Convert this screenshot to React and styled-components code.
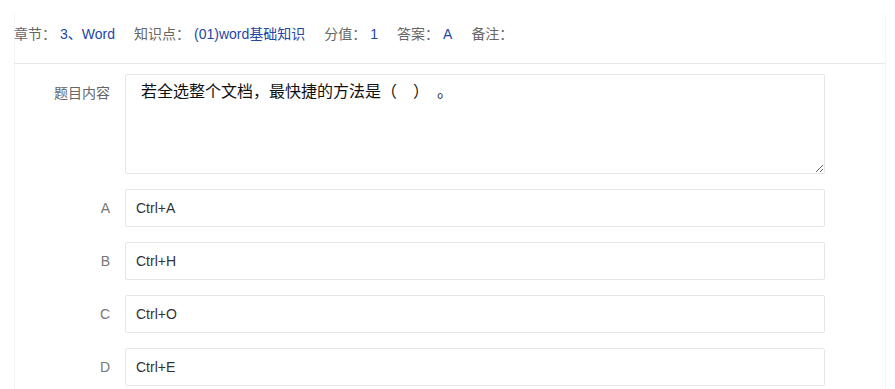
import React from "react";
import styled, { createGlobalStyle } from "styled-components";

const GlobalStyle = createGlobalStyle`
  html, body {
    margin: 0;
    padding: 0;
    background: #fff;
    font-family: "Liberation Sans", "Noto Sans CJK SC", sans-serif;
    font-size: 14px;
    color: #333;
  }
`;

const meta = [
  { label: "章节：", value: "3、Word" },
  { label: "知识点：", value: "(01)word基础知识" },
  { label: "分值：", value: "1" },
  { label: "答案：", value: "A" },
  { label: "备注：", value: "" },
];

const options = [
  { key: "A", text: "Ctrl+A" },
  { key: "B", text: "Ctrl+H" },
  { key: "C", text: "Ctrl+O" },
  { key: "D", text: "Ctrl+E" },
];

export default function App() {
  return (
    <>
      <GlobalStyle />
      <Page>
        <Card>
          <Header>
            {meta.map((m) => (
              <MetaItem key={m.label}>
                <MetaLabel>{m.label}</MetaLabel>
                {m.value && <MetaValue>{m.value}</MetaValue>}
              </MetaItem>
            ))}
          </Header>
          <Body>
            <FormRow>
              <Label top>题目内容</Label>
              <Content
                readOnly
                defaultValue="若全选整个文档，最快捷的方法是（　）　。"
              />
            </FormRow>
            {options.map((o) => (
              <FormRow key={o.key}>
                <Label>{o.key}</Label>
                <OptionInput readOnly defaultValue={o.text} />
              </FormRow>
            ))}
          </Body>
        </Card>
      </Page>
    </>
  );
}

const Page = styled.div`
  padding: 14px 9px 0 14px;
  height: 375px;
  overflow: hidden;
`;

const Card = styled.div`
  width: 872px;
  box-sizing: border-box;
  border-left: 1px solid #f4f4f4;
  border-right: 1px solid #f4f4f4;
  min-height: 400px;
`;

const Header = styled.div`
  display: flex;
  align-items: center;
  padding: 10px 0 19px;
  margin-left: -1px;
  line-height: 20px;
  border-bottom: 1px solid #e8e8e8;
`;

const MetaItem = styled.div`
  display: flex;
  margin-right: 19px;
`;

const MetaLabel = styled.span`
  color: #666;
`;

const MetaValue = styled.span`
  color: #2447a6;
  margin-left: 4px;
`;

const Body = styled.div`
  display: flex;
  flex-direction: column;
  gap: 15px;
  padding-top: 10px;
`;

const FormRow = styled.div`
  display: flex;
  align-items: flex-start;
`;

const Label = styled.label`
  width: 110px;
  box-sizing: border-box;
  padding: ${(p) => (p.top ? "9px 15px 0 0" : "0 15px 0 0")};
  text-align: right;
  color: ${(p) => (p.top ? "#666" : "#777")};
  line-height: ${(p) => (p.top ? "20px" : "38px")};
  flex-shrink: 0;
`;

const Content = styled.textarea`
  width: 700px;
  height: 100px;
  box-sizing: border-box;
  border: 1px solid #e6e6e6;
  border-radius: 2px;
  padding: 5px 15px;
  font-family: "Liberation Sans", "Noto Sans CJK SC", sans-serif;
  font-size: 16px;
  line-height: 24px;
  color: #111;
  outline: none;
  resize: both;
`;

const OptionInput = styled.input`
  width: 700px;
  height: 38px;
  box-sizing: border-box;
  border: 1px solid #e6e6e6;
  border-radius: 2px;
  padding: 0 10px;
  font-family: "Liberation Sans", "Noto Sans CJK SC", sans-serif;
  font-size: 14px;
  color: #333;
  outline: none;
`;
